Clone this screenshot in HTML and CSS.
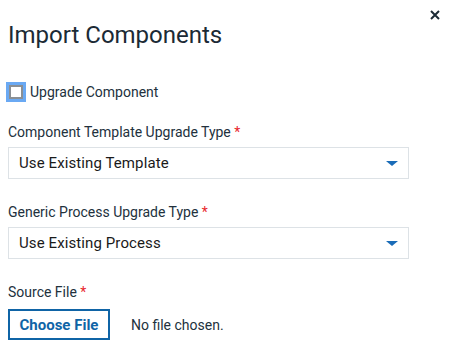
FILE: index.html
```html
<!DOCTYPE html>
<html lang="en">
  <head>
    <meta charset="UTF-8" />
    <title>Import Components</title>
    <link rel="stylesheet" href="styles.css">
  </head>
  <body>
    <div class="dialog">
      <button class="close" aria-label="Close">
        <svg width="10" height="10" viewBox="0 0 10 10">
          <path d="M1 1L9 9M9 1L1 9" stroke="#1b2a35" stroke-width="2" />
        </svg>
      </button>

      <h1>Import Components</h1>

      <label class="check-row">
        <span class="checkbox"></span>
        Upgrade Component
      </label>

      <div class="field first">
        <p class="label">Component Template Upgrade Type <span class="req">*</span></p>
        <div class="select">
          <span>Use Existing Template</span>
          <span class="caret"></span>
        </div>
      </div>

      <div class="field">
        <p class="label">Generic Process Upgrade Type <span class="req">*</span></p>
        <div class="select">
          <span>Use Existing Process</span>
          <span class="caret"></span>
        </div>
      </div>

      <div class="field">
        <p class="label">Source File <span class="req">*</span></p>
        <div class="file-row">
          <button class="choose">Choose File</button>
          <span class="file-name">No file chosen.</span>
        </div>
      </div>
    </div>
  </body>
</html>
```

FILE: styles.css
```css
* {
  margin: 0;
  padding: 0;
  box-sizing: border-box;
}

body {
  font-family: Roboto, "Liberation Sans", sans-serif;
  background: #fff;
  color: #22313d;
}

.dialog {
  position: relative;
  padding: 19px 40px 0 8px;
}

.close {
  position: absolute;
  top: 10px;
  right: 9px;
  border: none;
  background: none;
  width: 10px;
  height: 10px;
  display: flex;
}

h1 {
  font-size: 24px;
  font-weight: 400;
  color: #1b2a35;
  line-height: 32px;
}

.check-row {
  display: flex;
  align-items: center;
  gap: 4px;
  font-size: 14px;
  margin: 31px 0 0 -2px;
  height: 20px;
}

.checkbox {
  width: 20px;
  height: 20px;
  border: 3px solid #6aa9f3;
  background: #fff;
  box-shadow: inset 0 0 0 2px #8a8f94;
}

.field {
  margin-top: 23px;
}

.field.first {
  margin-top: 20px;
}

.label {
  font-size: 14px;
  line-height: 20px;
  color: #22313d;
}

.req {
  color: #e8262c;
}

.select {
  margin-top: 5px;
  height: 32px;
  border: 1px solid #dde2e6;
  display: flex;
  align-items: center;
  justify-content: space-between;
  padding: 0 10px 0 10px;
  font-size: 15px;
  color: #1a1a1a;
  letter-spacing: 0.1px;
}

.caret {
  width: 0;
  height: 0;
  border-left: 6px solid transparent;
  border-right: 6px solid transparent;
  border-top: 5px solid #1a6cb8;
}

.file-row {
  display: flex;
  align-items: center;
  gap: 21px;
  margin-top: 7px;
}

.choose {
  font-family: Roboto, "Liberation Sans", sans-serif;
  font-size: 15px;
  font-weight: 700;
  color: #0f64a6;
  background: #fff;
  border: 2px solid #0f64a6;
  height: 31px;
  width: 102px;
}

.file-name {
  font-size: 14px;
  color: #22313d;
}
```
